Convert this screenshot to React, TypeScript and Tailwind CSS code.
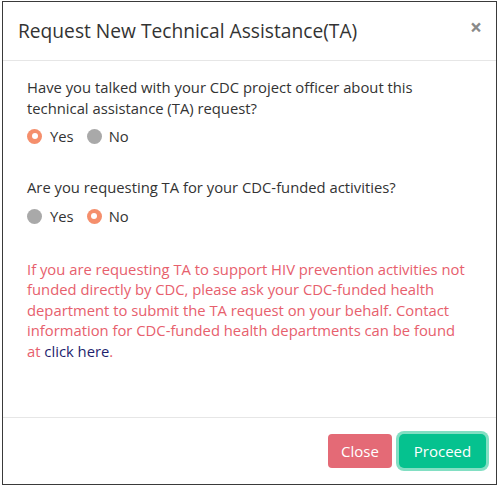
import React from "react";

const Radio = ({ checked }: { checked: boolean }) =>
  checked ? (
    <span className="inline-flex h-[15px] w-[15px] items-center justify-center rounded-full bg-[#f58f6c]">
      <span className="h-[6px] w-[6px] rounded-full bg-white" />
    </span>
  ) : (
    <span className="inline-block h-[15px] w-[15px] rounded-full bg-[#a9a9a9]" />
  );

const RadioRow = ({ value }: { value: "yes" | "no" }) => (
  <div className="flex items-center text-[14.8px] text-[#333]">
    <Radio checked={value === "yes"} />
    <span className="ml-[8px] mr-[13px]">Yes</span>
    <Radio checked={value === "no"} />
    <span className="ml-[7px]">No</span>
  </div>
);

export default function App() {
  return (
    <div
      className="h-[487px] w-[499px] bg-white pl-[2px] pt-[1px]"
      style={{ fontFamily: "'Open Sans', 'DejaVu Sans', sans-serif" }}
    >
      <div className="flex h-[484px] w-[495px] flex-col border border-[#3a3a3a] bg-white">
        {/* Header */}
        <div className="flex h-[59px] items-center justify-between border-b border-[#e6e6e6] pl-[15px] pr-[14px]">
          <h1 className="text-[19.2px] font-normal text-[#333]">
            Request New Technical Assistance(TA)
          </h1>
          <span className="mb-[8px] text-[21px] font-bold leading-none text-[#8a8a8a]">
            ×
          </span>
        </div>

        {/* Body */}
        <div className="flex-1 pl-[24px] pr-[20px] pt-[16px] text-[14.8px] leading-[20.5px]">
          <p className="text-[#333]">
            Have you talked with your CDC project officer about this
            <br />
            technical assistance (TA) request?
          </p>
          <div className="mt-[8px]">
            <RadioRow value="yes" />
          </div>

          <p className="mt-[30px] text-[#333]">
            Are you requesting TA for your CDC-funded activities?
          </p>
          <div className="mt-[9px]">
            <RadioRow value="no" />
          </div>

          <p className="mt-[32px] text-[#e7606d]">
            If you are requesting TA to support HIV prevention activities not
            <br />
            funded directly by CDC, please ask your CDC-funded health
            <br />
            department to submit the TA request on your behalf. Contact
            <br />
            information for CDC-funded health departments can be found
            <br />
            at <a className="text-[#1e1f6e]">click here</a>.
          </p>
        </div>

        {/* Footer */}
        <div className="flex h-[67px] items-center justify-end gap-[7px] border-t border-[#e6e6e6] pr-[10px]">
          <button className="h-[34px] w-[64px] rounded-[4px] bg-[#e46a76] text-[15px] text-white">
            Close
          </button>
          <button className="h-[34px] w-[87px] rounded-[5px] bg-[#05c28f] text-[15px] text-white ring-[3px] ring-[#82dfc3]">
            Proceed
          </button>
        </div>
      </div>
    </div>
  );
}
